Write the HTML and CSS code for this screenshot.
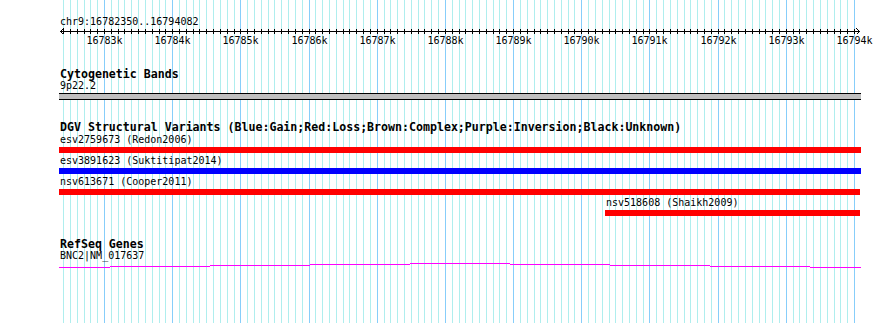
FILE: index.html
```html
<!DOCTYPE html>
<html lang="en">
<head>
  <meta charset="UTF-8" />
  <title>chr9:16782350..16794082</title>
  <link rel="stylesheet" href="styles.css">
</head>
<body>
  <div class="browser">
    <div class="panel">
      <!-- grid lines, filled in by script.js -->
      <svg class="grid" id="grid" width="802" height="323" shape-rendering="crispEdges"></svg>

      <div class="tracks">
        <!-- Ruler -->
        <section class="track-ruler">
          <div class="label">chr9:16782350..16794082</div>
          <svg class="ruler" id="ruler" width="802" height="18" shape-rendering="crispEdges">
            <rect class="ink" x="1" y="3" width="800" height="1"></rect>
            <polyline class="arrow" points="4.5,0.5 1.5,3.5 4.5,6.5"></polyline>
            <polyline class="arrow" points="797.5,0.5 800.5,3.5 797.5,6.5"></polyline>
          </svg>
        </section>

        <!-- Cytogenetic Bands -->
        <section class="track-cyto">
          <div class="track-title">Cytogenetic Bands</div>
          <div class="label">9p22.2</div>
          <div class="band"></div>
        </section>

        <!-- DGV -->
        <section class="track-dgv">
          <div class="track-title">DGV Structural Variants (Blue:Gain;Red:Loss;Brown:Complex;Purple:Inversion;Black:Unknown)</div>

          <div class="feature">
            <div class="label">esv2759673 (Redon2006)</div>
            <div class="bar loss" style="width: 802px"></div>
          </div>
          <div class="feature">
            <div class="label">esv3891623 (Suktitipat2014)</div>
            <div class="bar gain" style="width: 802px"></div>
          </div>
          <div class="feature">
            <div class="label">nsv613671 (Cooper2011)</div>
            <div class="bar loss" style="width: 801px"></div>
          </div>
          <div class="feature" style="margin-left: 546px">
            <div class="label">nsv518608 (Shaikh2009)</div>
            <div class="bar loss" style="width: 255px"></div>
          </div>
        </section>

        <!-- RefSeq Genes -->
        <section class="track-genes">
          <div class="track-title">RefSeq Genes</div>
          <div class="label">BNC2|NM_017637</div>
          <svg class="transcript" width="802" height="8" shape-rendering="crispEdges">
            <rect x="0" y="5" width="51" height="1"></rect>
            <rect x="51" y="4" width="100" height="1"></rect>
            <rect x="151" y="3" width="100" height="1"></rect>
            <rect x="251" y="2" width="100" height="1"></rect>
            <rect x="351" y="1" width="100" height="1"></rect>
            <rect x="451" y="2" width="100" height="1"></rect>
            <rect x="551" y="3" width="100" height="1"></rect>
            <rect x="651" y="4" width="100" height="1"></rect>
            <rect x="751" y="5" width="51" height="1"></rect>
          </svg>
        </section>
      </div>
    </div>
  </div>

  <script src="script.js"></script>
</body>
</html>
```

FILE: styles.css
```css
* {
  box-sizing: border-box;
}

body {
  margin: 0;
  background: #fff;
  color: #000;
  font-family: "DejaVu Sans Mono", "Liberation Mono", monospace;
}

.browser {
  width: 890px;
  height: 323px;
  overflow: hidden;
}

.panel {
  position: relative;
  margin-left: 59px;
  width: 802px;
  height: 323px;
}

.grid {
  position: absolute;
  top: 0;
  left: 0;
}

.grid-minor {
  fill: #afeeee;
}

.grid-major {
  fill: #87cefa;
}

.tracks {
  position: relative;
}

/* small labels: 6px per character, like the gd small font */
.label {
  height: 12px;
  padding-left: 1px;
  font-size: 10px;
  line-height: 12px;
  white-space: nowrap;
}

.track-title {
  height: 12px;
  padding-left: 1px;
  font-size: 11.6px;
  font-weight: bold;
  line-height: 12px;
  white-space: nowrap;
}

.track-ruler {
  padding-top: 16px;
}

.ruler {
  display: block;
  overflow: visible;
}

.ruler .ink,
.ruler .tick {
  fill: #000;
}

.ruler .arrow {
  fill: none;
  stroke: #000;
  stroke-width: 1;
}

.tick-label {
  font-size: 10px;
  fill: #000;
  text-anchor: middle;
}

.track-cyto {
  margin-top: 22px;
}

.band {
  margin-top: 1px;
  height: 7px;
  background: #bfbfbf;
  border-top: 1px solid #000;
  border-bottom: 1px solid #000;
}

.track-dgv {
  margin-top: 21px;
}

.feature {
  margin-top: 2px;
}

.track-title + .feature {
  margin-top: 1px;
}

.bar {
  margin-top: 1px;
  height: 6px;
}

.loss {
  background: #ff0000;
}

.gain {
  background: #0000ff;
}

.track-genes {
  margin-top: 22px;
}

.transcript {
  display: block;
  fill: #ff00ff;
}
```

FILE: script.js
```js
// scale: 16783000 sits at x=45 in the panel, 1kb = 68.18px
const ORIGIN = 16783000;
const PX_PER_BP = 750 / 11000;
const SVG_NS = "http://www.w3.org/2000/svg";

function xOf(bp) {
  return Math.round(45 + (bp - ORIGIN) * PX_PER_BP);
}

function el(name, attrs) {
  const node = document.createElementNS(SVG_NS, name);
  Object.keys(attrs).forEach(k => node.setAttribute(k, attrs[k]));
  return node;
}

const grid = document.getElementById("grid");
const ruler = document.getElementById("ruler");

for (let bp = 16782400; bp <= 16794000; bp += 100) {
  const x = xOf(bp);
  const major = bp % 1000 === 0;

  grid.appendChild(el("rect", {
    x: x, y: 0, width: 1, height: 323,
    class: major ? "grid-major" : "grid-minor"
  }));

  ruler.appendChild(el("rect", { x: x, y: 1, width: 1, height: 5, class: "tick" }));

  if (major) {
    const label = el("text", { x: x + 0.5, y: 16, class: "tick-label" });
    label.textContent = (bp / 1000) + "k";
    ruler.appendChild(label);
  }
}
```
